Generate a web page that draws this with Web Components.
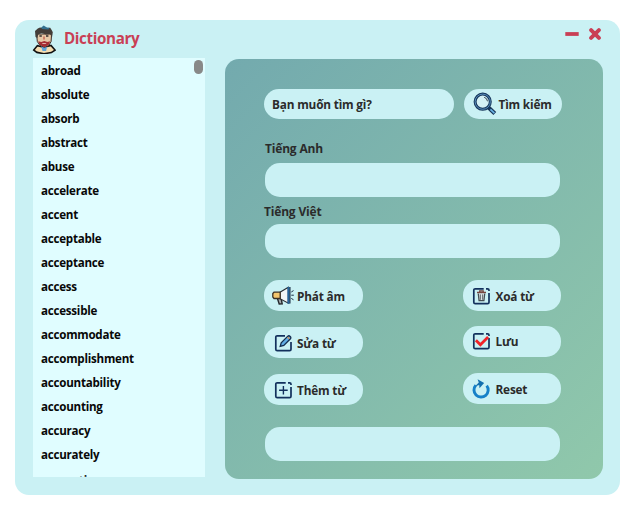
<!DOCTYPE html>
<html lang="vi">
<head>
<meta charset="utf-8">
<title>Dictionary</title>
<style>
body{margin:0;background:#fff;font-family:"Open Sans","Noto Sans",sans-serif;font-weight:700;font-size:11.8px;letter-spacing:-.18px;color:#2b2b2b;overflow:hidden}
</style>
</head>
<body>
<dictionary-window></dictionary-window>
<script>
const define = (name, html, setup) => customElements.define(name, class extends HTMLElement {
  constructor() {
    super();
    const t = document.createElement('template');
    t.innerHTML = html;
    this.attachShadow({ mode: 'open' }).append(t.content.cloneNode(true));
  }
  connectedCallback() { if (setup) setup(this, this.shadowRoot); }
});

const boxRight = '<path d="M11.7 1.8H3.2a1.4 1.4 0 0 0-1.4 1.4v12.1a1.4 1.4 0 0 0 1.4 1.4h12.4a1.4 1.4 0 0 0 1.4-1.4V6M14 1.8h1.6q1.4 0 1.4 1.4v.9" fill="none" stroke="#12305c" stroke-width="1.7"/>';
const icons = {
  search: [24, 24, '<path d="M15.5 15.5l6.3 6" stroke="#173457" stroke-width="4"/><path d="M17.4 17.4l4 3.8" stroke="#69b5e6" stroke-width="1.7"/><circle cx="9.7" cy="9.7" r="7.6" fill="#d5f1f5" stroke="#17375c" stroke-width="3"/><circle cx="9.7" cy="9.7" r="7.6" fill="none" stroke="#5e96c4" stroke-width=".9"/><path d="M11.2 5.3q3 .9 3.3 4" fill="none" stroke="#35434e" stroke-width="1"/>'],
  horn: [22, 20, '<path d="M5.3 12l1.9 6 3-.2-1.2-6z" fill="#a7adb0" stroke="#24282d" stroke-width="1.4"/><path d="M8 6.3l8.3-5.1v16L8 12.7z" fill="#f3f6f7" stroke="#252a31" stroke-width="1.1"/><path d="M2 6.2h6.2v6.3H2L.8 11V7.5z" fill="#f4c66e" stroke="#3b3025" stroke-width="1.3"/><path d="M16.6 1v16.7" stroke="#28659b" stroke-width="2.4"/><path d="M18 1v16.5M19.3 6l2.2-1.4M19.3 9.2h2.5M19.3 12.4l2.2 1.4" stroke="#172a40" stroke-width="1"/>'],
  edit: [18, 18, '<path d="M11 1.8H3.2a1.4 1.4 0 0 0-1.4 1.4v12.1a1.4 1.4 0 0 0 1.4 1.4h12.4a1.4 1.4 0 0 0 1.4-1.4V8" fill="none" stroke="#12305c" stroke-width="1.7"/><path d="M6.2 12.4l1-3.6 6.4-6.4q1.3-1.2 2.6 0t0 2.6l-6.4 6.4z" fill="#62aee5" stroke="#142d50" stroke-width="1.3"/><path d="M14 4.5l1-1" stroke="#d79454" stroke-width="2.4"/>'],
  plus: [18, 18, boxRight + '<path d="M9.4 5v8.6M5.1 9.3h8.6" stroke="#12305c" stroke-width="1.4"/>'],
  trash: [18, 18, boxRight + '<path d="M6.3 6.6l.8 7.1h4.8l.8-7.1" fill="#dce3e5" stroke="#454b50" stroke-width="1.3"/><path d="M8.4 7.4v5.4M10.6 7.4v5.4" stroke="#5a6064" stroke-width=".9"/><path d="M5 5.5h9M7.7 5.3V3.9h3.5v1.4" fill="none" stroke="#77453f" stroke-width="1.3"/>'],
  check: [18, 18, boxRight + '<path d="M3.9 8.2l4.5 4.6 7.7-7.7" fill="none" stroke="#f12228" stroke-width="2.8"/>'],
  reset: [18, 20, '<path d="M3.8 6.2a7.1 7.1 0 1 0 10.9.4" fill="none" stroke="#1681c8" stroke-width="2.9"/><path d="M5.6.2l6.5 3.9-4.6 5.2-.3-3.4-4.4 1.6L6.8 3.4z" fill="#126fae"/>'],
  reader: [24, 29, '<path d="M1.8 25.1l3.6-4.5 6.4 1.6 7.2-1.7 4 4.6-3.6 2.5-7.5 1.1-7-1.3z" fill="#f4ddb1" stroke="#111" stroke-width="1.6"/><path d="M9 20.5h6.3l-1.2 5.5h-3.6z" fill="#5ea4d8"/><path d="M4.6 9h15l-.5 7.5-2.3 4-4.4 1.8L8 20.5l-2.7-4z" fill="#e6c8a6" stroke="#3b2d27"/><path d="M3.5 12L3 6l2.8-2.4 2.2-1 3 .5 1-1 3.2 1 3-.4 1.6 2.5 1 2.1-.8 5-2-3.2-4 .3-4.5-1.5-3.3 1.5-.8 3.6z" fill="#433d38"/><path d="M9.2 2.4l2.5-1.8 3.1 1.8 2.7.3-1 1.7-6.5-.3z" fill="#327190"/><path d="M6.2 16.2l3.1.8 3-1 3 1 3-.8-1.5 3.6-4.5 2.5-4.6-2.5z" fill="#a52d32"/><path d="M9.8 17.9h4.7l-1 .9h-2.7z" fill="#f2ddd0"/><path d="M7.4 11h2.4M14 11h2.4" stroke="#302a2a" stroke-width="1.5"/><path d="M12 11.4v3" stroke="#c76855" stroke-width="1.5"/>'],
  minus: [14, 4, '<path d="M.3 2h13.4" stroke="#c93f55" stroke-width="3.8"/>'],
  close: [12, 12, '<path d="M2.1 2.1l7.8 7.8M9.9 2.1l-7.8 7.8" stroke="#c93f55" stroke-width="3.9" stroke-linecap="round"/>']
};

define('ui-icon', '<style>:host{display:block;flex:none}svg{display:block}</style>', (el, root) => {
  const [w, h, art] = icons[el.getAttribute('name')];
  root.innerHTML += `<svg width="${w}" height="${h}" viewBox="0 0 ${w} ${h}">${art}</svg>`;
});

define('pill-field', `<style>
:host{display:flex;align-items:center;box-sizing:border-box;height:34px;border-radius:15px;background:#caf1f4;padding:0 8px}
</style><slot></slot>`);

define('pill-button', `<style>
:host{display:flex;align-items:center;box-sizing:border-box;height:31px;border-radius:15px;background:#caf1f4;width:98.5px;white-space:nowrap}
.icon{display:flex;justify-content:flex-end;width:var(--icon,28px);margin-right:var(--gap,5px)}
</style><span class="icon"><slot name="icon"></slot></span><slot></slot>`);

define('word-list', `<style>
:host{display:flex;justify-content:space-between;box-sizing:border-box;width:172px;height:419px;background:#e0fdff;overflow:hidden;color:#080808;padding:1px 2px 0 8px}
.words{line-height:24px;font-size:11.6px;letter-spacing:-.24px}
.words div{height:24px}
.words div:last-child{padding-top:2px}
.thumb{width:9px;height:14px;border-radius:4.5px;background:#888988;margin-top:1px}
</style><div class="words"></div><div class="thumb"></div>`, (el, root) => {
  const words = 'abroad absolute absorb abstract abuse accelerate accent acceptable acceptance access accessible accommodate accomplishment accountability accounting accuracy accurately accusation'.split(' ');
  root.querySelector('.words').replaceChildren(...words.map(w => {
    const d = document.createElement('div');
    d.textContent = w;
    return d;
  }));
});

define('title-bar', `<style>
:host{display:flex;height:38px;color:#c93f55}
.logo{padding:5px 0 0 17px}
.name{font-size:15.2px;letter-spacing:-.38px;line-height:22px;padding:7px 0 0 8px;flex:1}
.controls{display:flex;gap:10px;padding-right:19px}
.min{padding-top:12px}.close{padding-top:8px}
</style>
<ui-icon class="logo" name="reader"></ui-icon><div class="name">Dictionary</div>
<div class="controls"><ui-icon class="min" name="minus"></ui-icon><ui-icon class="close" name="close"></ui-icon></div>`);

define('editor-panel', `<style>
:host{display:block;box-sizing:border-box;width:378px;height:420px;border-radius:14px;background:linear-gradient(135deg,#73aaae,#90c8ab);padding:30px 41px 0 39px}
.search{display:flex;justify-content:space-between}
.search pill-field{width:190px;height:30px}
.search pill-button{height:30px}
.label{line-height:18px;height:18px;font-size:12px}
.field{margin-left:1px;width:295.4px}
.actions{display:flex;justify-content:space-between;margin-top:22.4px}
.col{display:flex;flex-direction:column;gap:16px;--icon:27.5px;--gap:5.5px}
.right{margin-right:1px;--icon:27px;--gap:6px}
.right pill-button:nth-child(2){margin-top:-1.4px}
.right pill-button:nth-child(3){margin-top:.4px}
</style>
<div class="search"><pill-field>Bạn muốn tìm gì?</pill-field><pill-button style="--icon:33px;--gap:2px"><ui-icon slot="icon" name="search"></ui-icon>Tìm kiếm</pill-button></div>
<div class="label" style="margin:21.4px 0 4.6px 1px">Tiếng Anh</div>
<pill-field class="field"></pill-field>
<div class="label" style="margin:6.4px 0 2.6px">Tiếng Việt</div>
<pill-field class="field"></pill-field>
<div class="actions">
<div class="col">
<pill-button style="--icon:30px;--gap:3px"><ui-icon slot="icon" name="horn"></ui-icon>Phát âm</pill-button>
<pill-button><ui-icon slot="icon" name="edit"></ui-icon>Sửa từ</pill-button>
<pill-button><ui-icon slot="icon" name="plus"></ui-icon>Thêm từ</pill-button>
</div>
<div class="col right">
<pill-button><ui-icon slot="icon" name="trash"></ui-icon>Xoá từ</pill-button>
<pill-button><ui-icon slot="icon" name="check"></ui-icon>Lưu</pill-button>
<pill-button><ui-icon slot="icon" name="reset"></ui-icon>Reset</pill-button>
</div>
</div>
<pill-field class="field" style="margin-top:21.4px"></pill-field>`);

define('dictionary-window', `<style>
:host{display:block;margin:20px 0 0 15px;width:604.5px;height:475px;border-radius:14px;background:#caf1f4}
.body{display:flex;gap:20px;padding-left:18px}
editor-panel{margin-top:1px}
</style><title-bar></title-bar><div class="body"><word-list></word-list><editor-panel></editor-panel></div>`);
</script>
</body>
</html>
